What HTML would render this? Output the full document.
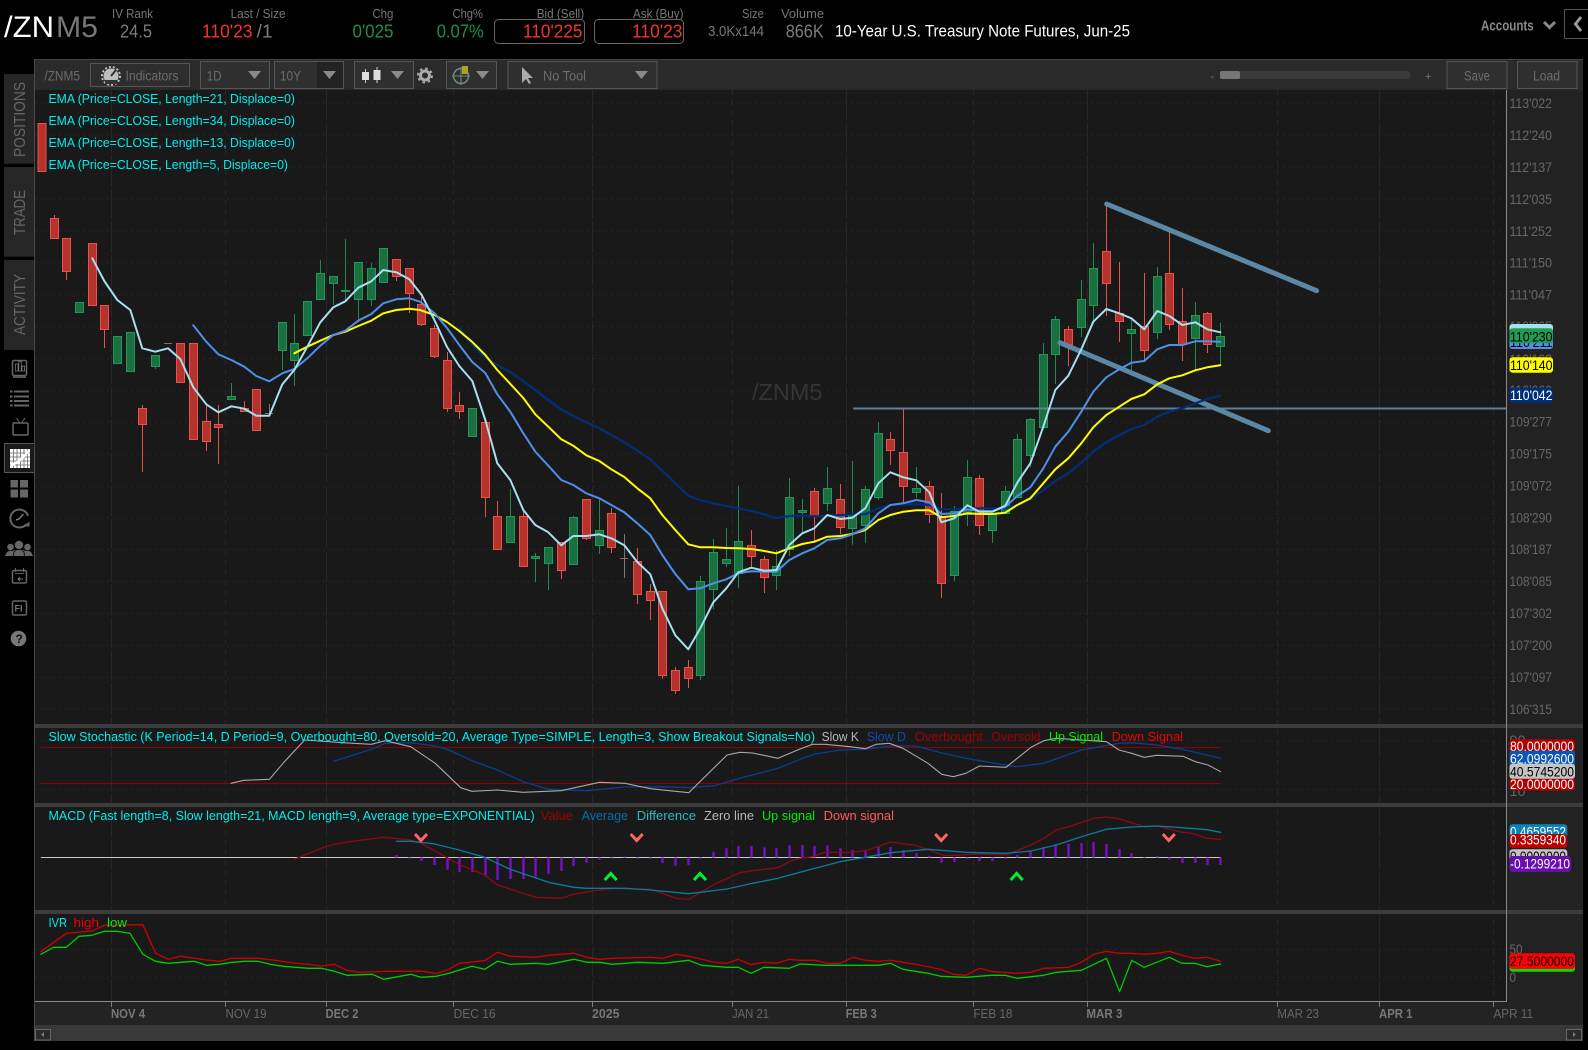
<!DOCTYPE html>
<html><head><meta charset="utf-8"><title>/ZNM5</title>
<style>
html,body{margin:0;padding:0;background:#000;width:1588px;height:1050px;overflow:hidden}
svg{display:block;font-family:"Liberation Sans",sans-serif}
.lb{font-size:13px;fill:#777}
.v{font-size:18px}
.r{fill:#f5342c}.g{fill:#1c8f4c}.gy{fill:#7c7c7c}
.tb{font-size:13.5px;fill:#6c6c6c}
.c{font-size:13.2px;fill:#00eded}
.s{font-size:13.2px}
.p{font-size:13.5px;fill:#666}
.a{font-size:13px;fill:#666}
.ab{font-size:13px;fill:#777;font-weight:bold}
.bd{font-size:14px}
.tab{font-size:16px;fill:#666}
.ln{fill:none;stroke-linejoin:round;stroke-linecap:round}
</style></head><body>
<svg width="1588" height="1050" viewBox="0 0 1588 1050" xmlns="http://www.w3.org/2000/svg">
<rect width="1588" height="1050" fill="#000"/>

<!-- HEADER -->
<text x="4" y="37" font-size="30" fill="#fff" textLength="50" lengthAdjust="spacingAndGlyphs">/ZN</text>
<text x="56" y="37" font-size="30" fill="#777" textLength="42" lengthAdjust="spacingAndGlyphs">M5</text>
<text class="lb" x="112" y="18" textLength="41" lengthAdjust="spacingAndGlyphs">IV Rank</text>
<text class="v gy" x="120" y="37.500" textLength="32" lengthAdjust="spacingAndGlyphs">24.5</text>
<text class="lb" x="230.6" y="18" textLength="55" lengthAdjust="spacingAndGlyphs">Last / Size</text>
<text class="v r" x="202" y="37.500" textLength="50.5" lengthAdjust="spacingAndGlyphs">110'23</text>
<text class="v gy" x="256.6" y="37.500" textLength="16" lengthAdjust="spacingAndGlyphs">/1</text>
<text class="lb" x="372.4" y="18" textLength="21" lengthAdjust="spacingAndGlyphs">Chg</text>
<text class="v g" x="352.5" y="37.500" textLength="41" lengthAdjust="spacingAndGlyphs">0'025</text>
<text class="lb" x="452.5" y="18" textLength="30.5" lengthAdjust="spacingAndGlyphs">Chg%</text>
<text class="v g" x="436.7" y="37.500" textLength="47" lengthAdjust="spacingAndGlyphs">0.07%</text>
<text class="lb" x="536.7" y="18" textLength="47.5" lengthAdjust="spacingAndGlyphs">Bid (Sell)</text>
<rect x="494.5" y="19.5" width="90" height="24" rx="4" fill="#000" stroke="#666"/>
<text class="v r" x="523" y="37.500" textLength="59.5" lengthAdjust="spacingAndGlyphs">110'225</text>
<text class="lb" x="633" y="18" textLength="50.5" lengthAdjust="spacingAndGlyphs">Ask (Buy)</text>
<rect x="594.5" y="19.5" width="89" height="24" rx="4" fill="#000" stroke="#666"/>
<text class="v r" x="632" y="37.500" textLength="50.5" lengthAdjust="spacingAndGlyphs">110'23</text>
<text class="lb" x="742" y="18" textLength="21.8" lengthAdjust="spacingAndGlyphs">Size</text>
<text x="708" y="36" font-size="15" fill="#777" textLength="56" lengthAdjust="spacingAndGlyphs">3.0Kx144</text>
<text class="lb" x="781" y="18" textLength="43" lengthAdjust="spacingAndGlyphs">Volume</text>
<text class="v gy" x="785.7" y="37.500" textLength="38" lengthAdjust="spacingAndGlyphs">866K</text>
<text x="835" y="36.500" font-size="17" fill="#fff" textLength="295" lengthAdjust="spacingAndGlyphs">10-Year U.S. Treasury Note Futures, Jun-25</text>
<text x="1481" y="30.500" font-size="15" font-weight="bold" fill="#888" textLength="52.7" lengthAdjust="spacingAndGlyphs">Accounts</text>
<path d="M1544 22l5.5 5.5 5.5-5.5" fill="none" stroke="#888" stroke-width="3"/>
<path d="M1564.5 38.5V9.5H1588M1564.5 38.5H1588" fill="none" stroke="#555"/>
<path d="M1581 17l-5.5 7 5.5 7" fill="none" stroke="#999" stroke-width="3"/>

<!-- SIDE TABS -->
<path d="M4 74h30v89.7H4zM4 167h30v89.7H4zM4 260h30v90H4z" fill="#262626"/>
<text class="tab" transform="translate(25 157) rotate(-90)" textLength="75" lengthAdjust="spacingAndGlyphs">POSITIONS</text>
<text class="tab" transform="translate(25 235) rotate(-90)" textLength="45" lengthAdjust="spacingAndGlyphs">TRADE</text>
<text class="tab" transform="translate(25 335) rotate(-90)" textLength="61" lengthAdjust="spacingAndGlyphs">ACTIVITY</text>

<!-- PANEL -->
<rect x="34" y="59" width="1549" height="982" fill="#191919"/>
<rect x="34" y="59" width="1549" height="31" fill="#2a2a2a"/>
<path d="M34 59.5H1583" stroke="#444"/>
<path d="M34.5 59V1041" stroke="#4a4a4a"/>
<rect x="1507" y="90" width="76" height="911" fill="#222"/>

<!-- Toolbar -->
<text class="tb" x="44.4" y="80.500" textLength="35.6" lengthAdjust="spacingAndGlyphs">/ZNM5</text>
<rect x="90.5" y="63.5" width="99" height="23" fill="#2d2d2d" stroke="#555"/>
<circle cx="111" cy="76" r="7.5" fill="#bdbdbd"/><circle cx="111" cy="76" r="9" fill="none" stroke="#bdbdbd" stroke-width="2" stroke-dasharray="2 2"/>
<path d="M106 81h10v2h-10zM111 76l5-6" stroke="#333" stroke-width="2" fill="none"/>
<text class="tb" x="125.5" y="80.500" textLength="53" lengthAdjust="spacingAndGlyphs">Indicators</text>
<rect x="200.5" y="61.5" width="69" height="27" fill="#2f2f2f" stroke="#555"/>
<text class="tb" x="206.6" y="80.500" textLength="15" lengthAdjust="spacingAndGlyphs">1D</text>
<path d="M248 71h13l-6.500 8z" fill="#8a8a8a"/>
<rect x="274.500" y="61.500" width="69" height="27" fill="#2f2f2f" stroke="#555"/>
<rect x="317" y="62" width="26" height="26" fill="#232323"/>
<text class="tb" x="280" y="80.500" textLength="21" lengthAdjust="spacingAndGlyphs">10Y</text>
<path d="M323 71h13l-6.500 8z" fill="#8a8a8a"/>
<rect x="354.500" y="61.500" width="59" height="27" fill="#2f2f2f" stroke="#555"/>
<path d="M365.500 69v14M377 67v16" stroke="#ccc"/><path d="M362 72h7v8h-7zM373.500 70h7v10h-7z" fill="#ddd"/>
<path d="M391 71h13l-6.500 8z" fill="#8a8a8a"/>
<circle cx="425" cy="75.500" r="4.500" fill="none" stroke="#aaa" stroke-width="3"/><circle cx="425" cy="75.500" r="7" fill="none" stroke="#aaa" stroke-width="2" stroke-dasharray="2.500 3"/>
<rect x="446.500" y="61.500" width="50" height="27" fill="#2f2f2f" stroke="#555"/>
<circle cx="461" cy="76" r="7.500" fill="none" stroke="#6f8a80" stroke-width="1.500"/><path d="M452 76h18M461 67v18" stroke="#6f8a80"/>
<rect x="462" y="66" width="6" height="8" fill="#a9a51f"/>
<path d="M476 71h13l-6.500 8z" fill="#8a8a8a"/>
<rect x="508" y="61.500" width="149" height="27" fill="#2f2f2f" stroke="#555"/>
<path d="M522 67v16l4-4 3 5 2-1-3-5h5z" fill="#aaa"/>
<text class="tb" x="543" y="80.500" textLength="43" lengthAdjust="spacingAndGlyphs">No Tool</text>
<path d="M635 71h13l-6.500 8z" fill="#8a8a8a"/>
<text x="1210.500" y="80" font-size="11" fill="#777">-</text>
<rect x="1220" y="71" width="190.500" height="8" rx="3" fill="#3a3a3a"/>
<rect x="1220" y="71" width="20" height="8" rx="2" fill="#777"/>
<text x="1425" y="80" font-size="11" fill="#777">+</text>
<rect x="1447" y="61.500" width="60" height="27" fill="#2f2f2f" stroke="#555"/>
<text class="tb" x="1464" y="80.500" textLength="26" lengthAdjust="spacingAndGlyphs">Save</text>
<rect x="1517.500" y="61.500" width="59.500" height="27" fill="#2f2f2f" stroke="#555"/>
<text class="tb" x="1533" y="80.500" textLength="27" lengthAdjust="spacingAndGlyphs">Load</text>

<!-- GRID -->
<g fill="none" stroke="#272727">
<path stroke-dasharray="2 4" d="M35 103H1506M35 135H1506M35 167H1506M35 199H1506M35 231H1506M35 262.500H1506M35 294.500H1506M35 326.500H1506M35 358.500H1506M35 390H1506M35 422H1506M35 454H1506M35 486H1506M35 518H1506M35 549.500H1506M35 581.500H1506M35 613.500H1506M35 645.500H1506M35 677.500H1506M35 709H1506"/>
<path stroke-dasharray="30 3" d="M111.500 90V724M326.500 90V724M592.500 90V724M846.500 90V724M1087.500 90V724M1379.500 90V724M111.500 728V803M326.500 728V803M592.500 728V803M846.500 728V803M1087.500 728V803M1379.500 728V803M111.500 807V910M326.500 807V910M592.500 807V910M846.500 807V910M1087.500 807V910M1379.500 807V910M111.500 914V1001M326.500 914V1001M592.500 914V1001M846.500 914V1001M1087.500 914V1001M1379.500 914V1001"/>
<path stroke-dasharray="5 5" d="M225.500 90V1001M453.500 90V1001M732.500 90V1001M973.500 90V1001M1277.500 90V1001M1493.500 90V1001"/>
<path stroke-dasharray="2 4" d="M35 741H1506M35 789.500H1506M35 949.500H1506M35 977.500H1506"/>
</g>

<!-- Hidden candle left -->
<rect x="38" y="123.500" width="8" height="48" fill="#b5332c" stroke="#e5534b"/>

<!-- CANDLE WICKS -->
<path fill="none" stroke="#e5534b" d="M54.500 215V239M66.500 271V280M104.500 330V348M142.500 405V472M206.500 405V451M218.500 405V464M244.500 401V412M396.500 259V281M409.500 268V313M421.500 297V326M434.500 325V358M447.500 352V412M459.500 392V419M485.500 422V517M497.500 501V550M523.500 511V567M561.500 542V579M586.500 499V540M611.500 508V553M637.500 548V604M650.500 584V620M662.500 591V679M675.500 667V694M688.500 660V688M751.500 530V567M764.500 556V593M814.500 488V543M840.500 484V534M890.500 432V465M903.500 409V503M929.500 481V523M941.500 493V598M979.500 475V535M1068.500 326V366M1106.500 206V316M1119.500 262V342M1144.500 273V361M1169.500 230V330M1182.500 288V361M1207.500 312V353"/>
<path fill="none" stroke="#22884e" d="M155.500 355V369M231.500 383V400M282.500 322V370M294.500 314V386M320.500 260V300M333.500 276V305M345.500 239V300M358.500 262V322M371.500 263V306M510.500 489V543M535.500 553V582M548.500 547V590M573.500 516V565M599.500 499V554M700.500 576V680M713.500 539V609M726.500 528V567M738.500 486V588M776.500 550V590M789.500 478V556M802.500 499V532M827.500 467V511M852.500 461V545M865.500 486V543M878.500 422V500M916.500 467V498M954.500 506V581M967.500 460V526M992.500 514V543M1005.500 486V514M1017.500 434V498M1030.500 418V467M1043.500 343V428M1055.500 316V384M1081.500 280V337M1093.500 243V323M1131.500 320V370M1157.500 267V339M1195.500 302V370M1220.500 323V365"/>
<path fill="none" stroke="#777" d="M164 343.500h8M269.500 404V414M265 413.500h8M624.500 534V578M620 558.500h8"/>

<!-- RED BODIES -->
<path fill="#b5332c" stroke="#e5534b" d="M50.500 218.500h8v20h-8zM62.500 238.500h8v33h-8zM88.500 243.500h8v62h-8zM100.500 305.500h8v24h-8zM138.500 408.500h8v16h-8zM176.500 343.500h8v39h-8zM189.500 343.500h8v96h-8zM202.500 421.500h8v20h-8zM214.500 424.500h8v3h-8zM240.500 408.500h8v3h-8zM252.500 389.500h8v41h-8zM392.500 259.500h8v17h-8zM405.500 268.500h8v25h-8zM417.500 304.500h8v20h-8zM430.500 328.500h8v28h-8zM443.500 360.500h8v48h-8zM455.500 405.500h8v6h-8zM481.500 422.500h8v75h-8zM493.500 516.500h8v33h-8zM519.500 516.500h8v50h-8zM557.500 542.500h8v28h-8zM582.500 499.500h8v39h-8zM607.500 513.500h8v34h-8zM633.500 561.500h8v33h-8zM646.500 591.500h8v9h-8zM658.500 591.500h8v84h-8zM671.500 670.500h8v20h-8zM684.500 667.500h8v11h-8zM747.500 545.500h8v11h-8zM760.500 559.500h8v18h-8zM810.500 491.500h8v25h-8zM836.500 499.500h8v28h-8zM886.500 439.500h8v11h-8zM899.500 452.500h8v34h-8zM925.500 486.500h8v28h-8zM937.500 516.500h8v67h-8zM975.500 478.500h8v47h-8zM1064.500 329.500h8v15h-8zM1102.500 251.500h8v32h-8zM1115.500 313.500h8v8h-8zM1140.500 326.500h8v24h-8zM1165.500 273.500h8v51h-8zM1178.500 321.500h8v23h-8zM1203.500 313.500h8v31h-8z"/>
<!-- GREEN BODIES -->
<path fill="#1a7040" stroke="#25965a" d="M75.500 302.500h8v10h-8zM113.500 336.500h8v27h-8zM126.500 332.500h8v39h-8zM151.500 355.500h8v11h-8zM227.500 396.500h8v3h-8zM278.500 322.500h8v28h-8zM290.500 343.500h8v17h-8zM303.500 301.500h8v34h-8zM316.500 273.500h8v26h-8zM329.500 276.500h8v7h-8zM341.500 290.500h8v1h-8zM354.500 262.500h8v37h-8zM367.500 268.500h8v31h-8zM379.500 248.500h8v34h-8zM468.500 408.500h8v28h-8zM506.500 516.500h8v26h-8zM531.500 556.500h8v2h-8zM544.500 547.500h8v16h-8zM569.500 517.500h8v47h-8zM595.500 530.500h8v15h-8zM696.500 581.500h8v94h-8zM709.500 552.500h8v37h-8zM722.500 559.500h8v4h-8zM734.500 541.500h8v32h-8zM772.500 566.500h8v9h-8zM785.500 497.500h8v52h-8zM798.500 510.500h8v2h-8zM823.500 488.500h8v15h-8zM848.500 514.500h8v14h-8zM861.500 489.500h8v36h-8zM874.500 433.500h8v64h-8zM912.500 488.500h8v4h-8zM950.500 511.500h8v64h-8zM963.500 477.500h8v37h-8zM988.500 514.500h8v16h-8zM1001.500 491.500h8v22h-8zM1013.500 439.500h8v58h-8zM1026.500 419.500h8v36h-8zM1039.500 354.500h8v73h-8zM1051.500 319.500h8v35h-8zM1077.500 299.500h8v28h-8zM1089.500 268.500h8v37h-8zM1127.500 329.500h8v4h-8zM1153.500 276.500h8v56h-8zM1191.500 315.500h8v23h-8zM1216.500 336.500h8v10h-8z"/>

<!-- TREND LINES -->
<path class="ln" d="M854 408.500H1506" stroke="#5f8096" stroke-width="2"/>
<path class="ln" d="M1106.700 204L1316.600 290.700M1060 342.700L1268.300 430.700" stroke="#5c88a7" stroke-width="5"/>

<!-- EMA LINES -->
<path class="ln" stroke="#012e78" stroke-width="2.200" d="M459.300 328L472.300 345L485.300 358L497.300 365L510.300 372L521.700 380L535.300 390L548.300 400L561.300 409.300L573.300 416L586.300 422.300L599.300 428.300L611.300 435L624.300 442.300L637.300 450.700L650.300 459.300L662.300 470.700L675.300 483.300L688.300 495.700L700.300 500.300L713.300 503.300L726.300 506L738.300 508.300L751.300 511L764.300 514.300L776.300 518L789.300 516L802.300 515.700L814.300 516.300L827.300 516L840.300 515L852.300 514.300L865.300 514.300L878.300 508.300L890.300 505L903.300 504.300L916.300 504L929.300 505L941.300 509.300L954.300 509.300L967.300 508.300L979.300 508.300L992.300 508.300L1005.300 508.300L1017.300 505L1030.300 499.300L1043.300 490L1055.300 481L1068.300 473.300L1081.300 462.700L1093.300 451.700L1106.300 442.300L1119.300 435L1131.300 429L1144.300 425L1157.300 416.700L1169.300 411.700L1182.300 408.300L1195.300 403.300L1207.300 399L1220.300 395.700"/>
<path class="ln" stroke="#ffff00" stroke-width="2" d="M294.300 353.300L307.300 346.700L320.300 340.700L333.300 335L345.300 331.700L358.300 326L371.300 320.700L383.300 313.300L396.300 310L409.300 308.700L420 310L434.400 315L447 322L459.300 331L472.300 342L485.300 355L497.300 370L506.700 380L523.300 398L535.300 414.300L548.300 426.700L561.300 439.300L573.300 445.700L586.300 455.300L599.300 461L611.300 469.300L624.300 477L637.300 488.300L650.300 498.300L662.300 515L675.300 530L688.300 544.300L700.300 547.300L713.300 547.300L726.300 548L738.300 548.300L751.300 549L764.300 551L776.300 553.300L789.300 548.300L802.300 544L814.300 541.700L827.300 536.700L840.300 536L852.300 534L865.300 530L878.300 520L890.300 515L903.300 511.700L916.300 510.300L929.300 510.300L941.300 517.300L954.300 516L967.300 513.300L979.300 514L992.300 514L1005.300 512.700L1017.300 505L1030.300 498.300L1043.300 483.300L1055.300 469.300L1068.300 458.300L1081.300 443.300L1093.300 427.300L1106.300 415L1119.300 406.700L1131.300 399L1144.300 394.300L1157.300 384.300L1169.300 378.300L1182.300 375.300L1195.300 370.300L1207.300 367.300L1220.300 365.300"/>
<path class="ln" stroke="#4f8fe8" stroke-width="2" d="M193.300 325.300L206.300 341.700L218.300 354.300L231.300 360L244.300 366.700L256.300 376L269.300 381.300L282.300 373.300L294.300 369L307.300 358.300L320.300 345.700L333.300 335L345.300 330.700L358.300 320.700L371.300 314L383.300 303.300L396.300 299.300L409.300 298.300L420 301.700L434.400 313L447 328L459.300 345L472.300 362L485.300 373L497.300 394.300L510.300 411.700L523.300 433.300L535.300 451.700L548.300 465.700L561.300 480L573.300 485L586.300 493.300L599.300 498.300L611.300 505L624.300 512.300L637.300 523.300L650.300 535L662.300 555L675.300 574L688.300 589.300L700.300 588.300L713.300 583.300L726.300 579.300L738.300 573.300L751.300 571.300L764.300 571.700L776.300 571.700L789.300 560L802.300 553.300L814.300 548.300L827.300 540L840.300 538.300L852.300 534.300L865.300 528.300L878.300 513.300L890.300 505L903.300 503.300L916.300 500L929.300 502.300L941.300 514L954.300 513.300L967.300 509.300L979.300 511L992.300 511.300L1005.300 506.700L1017.300 496L1030.300 487.300L1043.300 468.300L1055.300 446.700L1068.300 431.700L1081.300 411.700L1093.300 391.700L1106.300 377.300L1119.300 369.300L1131.300 362.700L1144.300 361L1157.300 349.300L1169.300 345L1182.300 345L1195.300 341.300L1207.300 341.300L1220.300 341.700"/>
<path class="ln" stroke="#a8dff0" stroke-width="2" d="M92.300 258.300L104.300 281L117.300 300L130.300 310L142.300 348.300L155.300 351.700L168 348.300L180.300 359L193.300 387.300L206.300 404.300L218.300 412.300L231.300 406.300L244.300 408.700L256.300 415.700L269.300 415.700L282.300 384.300L294.300 370L307.300 346.700L320.300 322.300L333.300 307.300L345.300 301.300L358.300 287.700L371.300 281.300L383.300 270L396.300 272.300L409.300 279.300L421.700 295L434.400 320L447 347L459.300 366L472.300 381L485.300 420L497.300 463.300L510.300 480L523.300 510L535.300 525L548.300 532.300L561.300 545.300L573.300 536L586.300 536L599.300 534.300L611.300 538.300L624.300 545.300L637.300 562L650.300 574.300L662.300 608.300L675.300 635.300L688.300 649.300L700.300 628.300L713.300 602.300L726.300 588.300L738.300 572.300L751.300 567.700L764.300 570.700L776.300 570L789.300 545L802.300 533.300L814.300 528.300L827.300 515L840.300 519L852.300 517.700L865.300 508.300L878.300 483.300L890.300 472.300L903.300 477.300L916.300 480.300L929.300 492.300L941.300 522.300L954.300 518.300L967.300 505.300L979.300 511.700L992.300 511.700L1005.300 505.700L1017.300 482.700L1030.300 463.300L1043.300 426.700L1055.300 390L1068.300 375.700L1081.300 349.300L1093.300 321.700L1106.300 309L1119.300 313.300L1131.300 318.300L1144.300 329.300L1157.300 311L1169.300 316L1182.300 325L1195.300 322.300L1207.300 329.300L1220.300 332.300"/>

<!-- Watermark -->
<text x="752" y="400" font-size="23.500" fill="#343434">/ZNM5</text>

<!-- Legend EMA -->
<text class="c" x="48.500" y="103" textLength="246.500" lengthAdjust="spacingAndGlyphs">EMA (Price=CLOSE, Length=21, Displace=0)</text>
<text class="c" x="48.500" y="125" textLength="246.500" lengthAdjust="spacingAndGlyphs">EMA (Price=CLOSE, Length=34, Displace=0)</text>
<text class="c" x="48.500" y="147" textLength="246.500" lengthAdjust="spacingAndGlyphs">EMA (Price=CLOSE, Length=13, Displace=0)</text>
<text class="c" x="48.500" y="169" textLength="239.500" lengthAdjust="spacingAndGlyphs">EMA (Price=CLOSE, Length=5, Displace=0)</text>

<!-- Price axis -->
<path d="M1506.500 90V1001" stroke="#8a8a8a"/>
<g class="p">
<text class="p" x="1509.500" y="108" textLength="42.500" lengthAdjust="spacingAndGlyphs">113'022</text>
<text class="p" x="1509.500" y="140" textLength="42.500" lengthAdjust="spacingAndGlyphs">112'240</text>
<text class="p" x="1509.500" y="172" textLength="42.500" lengthAdjust="spacingAndGlyphs">112'137</text>
<text class="p" x="1509.500" y="204" textLength="42.500" lengthAdjust="spacingAndGlyphs">112'035</text>
<text class="p" x="1509.500" y="236" textLength="42.500" lengthAdjust="spacingAndGlyphs">111'252</text>
<text class="p" x="1509.500" y="267.500" textLength="42.500" lengthAdjust="spacingAndGlyphs">111'150</text>
<text class="p" x="1509.500" y="299.500" textLength="42.500" lengthAdjust="spacingAndGlyphs">111'047</text>
<text class="p" x="1509.500" y="331" textLength="42.500" lengthAdjust="spacingAndGlyphs">110'265</text>
<text class="p" x="1509.500" y="364" textLength="42.500" lengthAdjust="spacingAndGlyphs">110'162</text>
<text class="p" x="1509.500" y="395" textLength="42.500" lengthAdjust="spacingAndGlyphs">110'060</text>
<text class="p" x="1509.500" y="426.500" textLength="42.500" lengthAdjust="spacingAndGlyphs">109'277</text>
<text class="p" x="1509.500" y="458.500" textLength="42.500" lengthAdjust="spacingAndGlyphs">109'175</text>
<text class="p" x="1509.500" y="490.500" textLength="42.500" lengthAdjust="spacingAndGlyphs">109'072</text>
<text class="p" x="1509.500" y="522.500" textLength="42.500" lengthAdjust="spacingAndGlyphs">108'290</text>
<text class="p" x="1509.500" y="554" textLength="42.500" lengthAdjust="spacingAndGlyphs">108'187</text>
<text class="p" x="1509.500" y="586" textLength="42.500" lengthAdjust="spacingAndGlyphs">108'085</text>
<text class="p" x="1509.500" y="618" textLength="42.500" lengthAdjust="spacingAndGlyphs">107'302</text>
<text class="p" x="1509.500" y="650" textLength="42.500" lengthAdjust="spacingAndGlyphs">107'200</text>
<text class="p" x="1509.500" y="682" textLength="42.500" lengthAdjust="spacingAndGlyphs">107'097</text>
<text class="p" x="1509.500" y="714" textLength="42.500" lengthAdjust="spacingAndGlyphs">106'315</text>
</g>
<!-- Badges -->
<rect x="1509.500" y="324" width="43.500" height="16" rx="3" fill="#a8dff0"/>
<rect x="1509.500" y="333" width="43.500" height="16" rx="3" fill="#4f8fe8"/>
<text class="bd" x="1510" y="347" fill="#000" textLength="42.500" lengthAdjust="spacingAndGlyphs">110'211</text>
<rect x="1509.500" y="328.300" width="43.500" height="15" rx="3" fill="#1f9d55"/>
<text class="bd" x="1510" y="341.500" fill="#000" textLength="42.500" lengthAdjust="spacingAndGlyphs">110'230</text>
<rect x="1509.500" y="357.300" width="43.500" height="15.400" rx="3" fill="#ffff00"/>
<text class="bd" x="1510" y="370" fill="#000" textLength="42.500" lengthAdjust="spacingAndGlyphs">110'140</text>
<rect x="1509.500" y="387.700" width="43.500" height="15" rx="3" fill="#012e78"/>
<text class="bd" x="1510" y="400" fill="#fff" textLength="42.500" lengthAdjust="spacingAndGlyphs">110'042</text>

<!-- Separators -->
<path d="M35 724h1548v4H35zM35 803h1548v4H35zM35 910h1548v4H35z" fill="#3c3c3c"/>
<path d="M1506.500 724V1001" stroke="#8a8a8a"/>

<!-- STOCHASTIC -->
<path d="M40.800 747.500H1220.600M40.800 783.500H1220.600" stroke="#8f0000" fill="none"/>
<path class="ln" stroke="#0a3d91" stroke-width="1.300" d="M333.700 761.300L371.400 749.300L385.200 743.300L410.700 742.700L435.200 746L449 750L472 760.700L497.400 770L523 781.700L548.500 789.300L586.700 790.700L625 787L663 786.700L688.800 787.700L714.300 785.700L739.800 778.300L778 768.300L800 759.300L815 754L840 750L865.300 749.300L890.500 746L915.600 746L940.700 752.700L965.800 758.300L991 762.700L1016 766.700L1043.700 763.300L1081.400 750L1119 743.300L1131.700 742.700L1156.800 745L1182 749.300L1220.600 758.300"/>
<path class="ln" stroke="#a8a8a8" stroke-width="1.100" d="M231 783.300L243.900 780.300L269.400 779.300L283 763.300L304.600 740L342.900 742.700L371.400 744.300L385.200 740.700L410.700 746.700L435.200 763.300L460.700 787.700L471.900 791.300L497.400 790L523 792.300L561.200 790.700L599.500 782.300L625 783.300L650.500 788.700L688.800 792.700L727 755L739.800 752.300L752.600 753L778 758.300L800 749L812.600 744.300L825 744.300L850 746.700L865.300 748.700L876.400 744.300L889.400 743.300L903 748.300L928 763.300L941.700 774.300L953.300 776.700L965.800 773.300L979.400 766L1006 767.300L1031 747.300L1043.700 740.700L1056.300 738.300L1106.500 741.700L1119 750L1131.700 753.300L1144.200 757.300L1156.800 755.300L1183 756.300L1195.500 761.700L1208 765L1220.600 771.700"/>
<text class="s" x="48.500" y="741" fill="#00eded" textLength="766.500" lengthAdjust="spacingAndGlyphs">Slow Stochastic (K Period=14, D Period=9, Overbought=80, Oversold=20, Average Type=SIMPLE, Length=3, Show Breakout Signals=No)</text>
<text class="s" x="821.600" y="741" fill="#b5b5b5" textLength="37.200" lengthAdjust="spacingAndGlyphs">Slow K</text>
<text class="s" x="866.800" y="741" fill="#0a4bb0" textLength="39.200" lengthAdjust="spacingAndGlyphs">Slow D</text>
<text class="s" x="914.600" y="741" fill="#a00000" textLength="68.400" lengthAdjust="spacingAndGlyphs">Overbought</text>
<text class="s" x="991.500" y="741" fill="#a00000" textLength="49" lengthAdjust="spacingAndGlyphs">Oversold</text>
<text class="s" x="1049" y="741" fill="#00ee00" textLength="54" lengthAdjust="spacingAndGlyphs">Up Signal</text>
<text class="s" x="1111.600" y="741" fill="#ee0000" textLength="71.400" lengthAdjust="spacingAndGlyphs">Down Signal</text>
<text class="p" x="1509.500" y="745" textLength="16" lengthAdjust="spacingAndGlyphs">90</text>
<text class="p" x="1509.500" y="796" textLength="16" lengthAdjust="spacingAndGlyphs">10</text>
<rect x="1509.500" y="739.300" width="65.500" height="15" rx="3" fill="#b50000"/>
<text class="bd" x="1510" y="751" fill="#fff" textLength="64" lengthAdjust="spacingAndGlyphs">80.0000000</text>
<rect x="1509.500" y="750.700" width="65.500" height="16" rx="3" fill="#0a56b8"/>
<text class="bd" x="1510" y="763.500" fill="#fff" textLength="64" lengthAdjust="spacingAndGlyphs">62.0992600</text>
<rect x="1509.500" y="777" width="65.500" height="13.500" rx="3" fill="#b50000"/>
<text class="bd" x="1510" y="789" fill="#fff" textLength="64" lengthAdjust="spacingAndGlyphs">20.0000000</text>
<rect x="1509.500" y="763.700" width="65.500" height="15" rx="3" fill="#c4c4c4"/>
<text class="bd" x="1510" y="776.500" fill="#000" textLength="64" lengthAdjust="spacingAndGlyphs">40.5745200</text>

<!-- MACD -->
<path d="M40.800 857.500H1220.600" stroke="#c8c8c8"/>
<path fill="none" stroke="#7410bd" stroke-width="2.500" d="M396.500 857.500V855M409.500 857.500V858.500M421.500 857.500V861M434.500 857.500V865M447.500 857.500V869.700M459.500 857.500V872M472.500 857.500V872M485.500 857.500V876M497.500 857.500V880M510.500 857.500V879M523.500 857.500V879M535.500 857.500V877.300M548.500 857.500V874M561.500 857.500V871M573.500 857.500V866M586.500 857.500V862.700M599.500 857.500V859.700M611.500 857.500V858.500M624.500 857.500V856.500M637.500 857.500V858.700M650.500 857.500V858.700M662.500 857.500V863M675.500 857.500V865.700M688.500 857.500V865M700.500 857.500V858.700M713.500 857.500V851.700M726.500 857.500V848.300M738.500 857.500V846M751.500 857.500V846M764.500 857.500V847.300M776.500 857.500V848.300M789.500 857.500V845.300M802.500 857.500V845M814.500 857.500V846M827.500 857.500V845.300M840.500 857.500V848.300M852.500 857.500V850M865.500 857.500V850M878.500 857.500V847M890.500 857.500V847M903.500 857.500V850M916.500 857.500V853M929.500 857.500V855.700M941.500 857.500V862.700M954.500 857.500V862M967.500 857.500V859M979.500 857.500V861M992.500 857.500V861M1005.500 857.500V858.700M1017.500 857.500V855M1030.500 857.500V851.300M1043.500 857.500V847M1055.500 857.500V844.300M1068.500 857.500V843.700M1081.500 857.500V843M1093.500 857.500V842M1106.500 857.500V844M1119.500 857.500V849M1131.500 857.500V853M1144.500 857.500V858.300M1157.500 857.500V856M1169.500 857.500V859.700M1182.500 857.500V863M1195.500 857.500V863M1207.500 857.500V865M1220.500 857.500V865"/>
<path class="ln" stroke="#8b0a14" stroke-width="1.300" d="M294.400 859.300L321.400 848.300L333.700 844.300L357 840.700L383.700 837.300L410.700 840L421 843.300L446.400 857.300L459.200 864.300L484.700 875L497.400 885L535.700 897.300L561.200 898.300L574 894L612.200 888.300L650.500 889.300L676 898.300L688.800 899.300L714.300 884.300L739.800 872.700L752.600 870.700L778 867.700L790.800 861L800 858.300L812.600 856.700L825 852.300L850 852.300L865.300 850.700L890.500 842L915.600 845.300L943.200 855.300L953.300 855.300L978.400 854L1006 855L1031 845L1043.700 838.300L1056.300 830L1068.800 826.700L1094 818.300L1106.500 817L1119 818.700L1144.200 826.700L1156.800 826L1182 832.300L1192 833.300L1207 838.300L1220.600 839.300"/>
<path class="ln" stroke="#0c7a9e" stroke-width="1.300" d="M396.400 841.300L410.700 841.300L433.700 843.700L459.200 850L484.700 857.300L510.200 869.300L548.500 882.300L574 887.300L586.700 888.300L625 888.300L650.500 890L688.800 893.700L727 889L752.600 883.300L778 878.300L800 872.300L840 861.700L865.300 857.300L890.500 852.700L928 849.300L965.800 852.300L1006 853.300L1031 851L1056.300 845L1081.400 836.700L1106.500 829.300L1131.700 827L1156.800 826L1182 827.700L1207 829.700L1220.600 832.300"/>
<path fill="none" stroke="#ff6464" stroke-width="3" d="M415 834l6 6.500 6-6.500M630.700 834l6 6.500 6-6.500M935.200 834l6 6.500 6-6.500M1162.800 834l6 6.500 6-6.500"/>
<path fill="none" stroke="#00ee33" stroke-width="3" d="M604.700 880l6-6.500 6 6.500M694 880l6-6.500 6 6.500M1010.600 880l6-6.500 6 6.500"/>
<text class="s" x="48.500" y="820" fill="#00eded" textLength="486.200" lengthAdjust="spacingAndGlyphs">MACD (Fast length=8, Slow length=21, MACD length=9, Average type=EXPONENTIAL)</text>
<text class="s" x="540.800" y="820" fill="#a00000" textLength="32.200" lengthAdjust="spacingAndGlyphs">Value</text>
<text class="s" x="581.600" y="820" fill="#0a6ea8" textLength="46.400" lengthAdjust="spacingAndGlyphs">Average</text>
<text class="s" x="636.700" y="820" fill="#2fb8bb" textLength="59.300" lengthAdjust="spacingAndGlyphs">Difference</text>
<text class="s" x="704" y="820" fill="#b5b5b5" textLength="50" lengthAdjust="spacingAndGlyphs">Zero line</text>
<text class="s" x="762" y="820" fill="#00ee00" textLength="53" lengthAdjust="spacingAndGlyphs">Up signal</text>
<text class="s" x="823.600" y="820" fill="#ff5a5a" textLength="70.400" lengthAdjust="spacingAndGlyphs">Down signal</text>
<rect x="1509.500" y="824.300" width="57.800" height="14" rx="3" fill="#0a84b8"/>
<text class="bd" x="1510" y="836.500" fill="#fff" textLength="56" lengthAdjust="spacingAndGlyphs">0.4659552</text>
<rect x="1509.500" y="834" width="57.800" height="14" rx="3" fill="#b50000"/>
<text class="bd" x="1510" y="844.500" fill="#fff" textLength="56" lengthAdjust="spacingAndGlyphs">0.3359340</text>
<rect x="1509.500" y="849.300" width="57.800" height="14" rx="3" fill="#c4c4c4"/>
<text class="bd" x="1510" y="861" fill="#000" textLength="56" lengthAdjust="spacingAndGlyphs">0.0000000</text>
<rect x="1509.500" y="856" width="61.500" height="16" rx="3" fill="#6a0dad"/>
<text class="bd" x="1510" y="868.500" fill="#fff" textLength="60" lengthAdjust="spacingAndGlyphs">-0.1299210</text>

<!-- IVR -->
<path class="ln" stroke="#00cc00" stroke-width="1.300" d="M40.800 954.300L53.600 947.300L66.300 947.300L79 936.300L91.800 935.300L104.600 931.300L117.300 931.300L130 933.300L142.900 954.300L155.600 961.300L168.400 963.300L193.900 961.300L206.600 965.300L219.400 964.300L232 962.300L244.900 961.300L257.700 961.300L270.400 964.300L283.200 966.300L308.700 968.300L321.400 968.300L334.200 971.300L347 975.300L372.400 974.300L383.700 979.300L410.700 974.300L421 977.300L436.200 976.300L449 973.300L472 966.300L484.700 969.300L497.400 961.300L510.200 964.300L535.700 963.300L548.500 964.300L574 959.300L586.700 962.300L599.500 962.300L612.200 964.300L637.700 962.300L663.300 963.300L688.800 960.300L701.500 965.300L727 967.300L738.300 967.300L751 973.300L763.800 967.300L789.300 968.300L800 964L825 965.300L878 965.300L890.500 963.300L903 969.300L928 973.300L940.700 976.300L965.800 977.300L991 975.300L1005 975.300L1017 978.300L1043.700 975.300L1056.300 972.300L1081.400 970.300L1106.500 958.300L1119.600 991.700L1131.700 960.300L1144.200 967.300L1169.300 957.300L1182 963.300L1194.500 963.300L1207 966.700L1220.600 964"/>
<path class="ln" stroke="#cc0000" stroke-width="1.300" d="M40.800 951.700L66.300 933.300L91.800 931L104.600 925.300L142.900 924.700L155.600 953.300L168.400 959.300L181 956.300L206.600 960L219.400 961.300L232 958.300L257.700 958.300L270.400 959.700L293.400 963L308.700 964.300L321.400 966L334.200 964.300L347 970.300L359.700 972.300L385.200 971.300L423.500 971.300L436.200 973.700L449 969.300L459.200 963.300L484.700 960.700L497.400 952.300L510.200 956.300L535.700 957.300L548.500 955.300L574 953.300L586.700 957.300L599.500 959.300L612.200 958.300L650.500 957.300L663.300 958.300L676 954.300L688.800 956.300L714.300 962.300L727 963.300L738.300 959.300L751 964.700L763.800 962.300L776.500 963.300L789.300 959.300L800 960.300L815 960.300L827.600 963.300L840.200 963.300L852.800 957.300L865.300 960.300L878 961.300L890.500 960.300L915.600 964.300L940.700 969.300L953.300 974.300L965.800 975.300L979.400 968.300L991 971.300L1016 973.300L1031 972.300L1043.700 968.300L1068.800 967.300L1081.400 962.300L1094 954.300L1106.500 951.300L1119 953.300L1131.700 953.300L1144.200 954.300L1156.800 953.300L1169.300 951.300L1182 955.300L1194.500 958.300L1207 957.300L1220.600 961.300"/>
<text class="s" x="48.500" y="927" fill="#00eded" textLength="18.500" lengthAdjust="spacingAndGlyphs">IVR</text>
<text class="s" x="73.500" y="927" fill="#ee0000" textLength="25.500" lengthAdjust="spacingAndGlyphs">high</text>
<text class="s" x="107" y="927" fill="#00ee00" textLength="20" lengthAdjust="spacingAndGlyphs">low</text>
<text class="p" x="1509.500" y="954" textLength="13" lengthAdjust="spacingAndGlyphs">50</text>
<text class="p" x="1509.500" y="982" textLength="6.500" lengthAdjust="spacingAndGlyphs">0</text>
<rect x="1509.500" y="956" width="65.500" height="15.700" rx="3" fill="#00e000"/>
<rect x="1509.500" y="953.300" width="65.500" height="15.700" rx="3" fill="#ff0000"/>
<text class="bd" x="1510" y="966" fill="#000" textLength="64" lengthAdjust="spacingAndGlyphs">27.5000000</text>

<!-- Time axis -->
<rect x="35" y="1001" width="1548" height="24" fill="#232323"/>
<path d="M35 1001.500H1507" stroke="#8a8a8a"/>
<path d="M111.500 1002v5M225.500 1002v5M326.500 1002v5M453.500 1002v5M592.500 1002v5M732.500 1002v5M846.500 1002v5M973.500 1002v5M1087.500 1002v5M1277.500 1002v5M1379.500 1002v5M1493.500 1002v5" stroke="#777"/>
<text class="ab" x="111" y="1018" textLength="34" lengthAdjust="spacingAndGlyphs">NOV 4</text>
<text class="a" x="225.500" y="1018" textLength="41" lengthAdjust="spacingAndGlyphs">NOV 19</text>
<text class="ab" x="325.500" y="1018" textLength="33" lengthAdjust="spacingAndGlyphs">DEC 2</text>
<text class="a" x="453.600" y="1018" textLength="42" lengthAdjust="spacingAndGlyphs">DEC 16</text>
<text class="ab" x="592" y="1018" textLength="27.500" lengthAdjust="spacingAndGlyphs">2025</text>
<text class="a" x="732" y="1018" textLength="37" lengthAdjust="spacingAndGlyphs">JAN 21</text>
<text class="ab" x="845.700" y="1018" textLength="31" lengthAdjust="spacingAndGlyphs">FEB 3</text>
<text class="a" x="973.400" y="1018" textLength="39" lengthAdjust="spacingAndGlyphs">FEB 18</text>
<text class="ab" x="1086.400" y="1018" textLength="36" lengthAdjust="spacingAndGlyphs">MAR 3</text>
<text class="a" x="1277.400" y="1018" textLength="41.500" lengthAdjust="spacingAndGlyphs">MAR 23</text>
<text class="ab" x="1379" y="1018" textLength="33.500" lengthAdjust="spacingAndGlyphs">APR 1</text>
<text class="a" x="1493.500" y="1018" textLength="39.500" lengthAdjust="spacingAndGlyphs">APR 11</text>

<!-- Scrollbar -->
<rect x="35" y="1025" width="1548" height="16" fill="#383838"/>
<rect x="35.500" y="1029.500" width="15" height="10.500" fill="#2a2a2a" stroke="#666"/>
<path d="M44 1032v5l-3-2.500z" fill="#777"/>
<rect x="1566.500" y="1029.500" width="15" height="10.500" fill="#2a2a2a" stroke="#666"/>
<path d="M1573 1032v5l3-2.500z" fill="#777"/>

<!-- SIDE ICONS -->
<rect x="12.500" y="360.500" width="14" height="15" rx="1.500" fill="none" stroke="#666" stroke-width="1.500"/>
<path d="M13 377h13" stroke="#555" stroke-width="2"/>
<path d="M15.500 364h2.500v7h-2.500zM18.800 361.500h2.500v9.500h-2.500zM22 366h2.500v5h-2.500z" fill="none" stroke="#777" stroke-width=".8"/>
<path d="M10 391.500h2.500M14 391.500h15M10 396.500h2.500M14 396.500h15M10 401h2.500M14 401h15M10 405.500h2.500M14 405.500h15" stroke="#666" stroke-width="2"/>
<rect x="13" y="423" width="15" height="12" rx="1" fill="none" stroke="#666" stroke-width="1.500"/>
<path d="M16.500 418l3 4.500M25 418l-3 4.500" stroke="#666"/>
<path d="M4 443.500H34V473H4z" fill="#191919"/>
<path d="M34 443.500H4.500V472.500H34" fill="none" stroke="#555"/>
<rect x="10" y="449" width="20" height="19" fill="#fff"/>
<path d="M13.500 449v19M17 449v19M20.500 449v19M24 449v19M27.500 449v19M10 453h20M10 457h20M10 461h20M10 465h20" stroke="#666" stroke-width=".8"/>
<path d="M11 466l8-5 5-5 5-5" stroke="#fff" stroke-width="2.500" fill="none"/>
<path d="M10.500 480h7.500v7.500h-7.500zM20 480h8v7.500h-8zM10.500 489.500h7.500v8h-7.500zM20 489.500h8v8h-8z" fill="#666"/>
<path d="M26.500 524a9 9 0 1 1 1.500-8" fill="none" stroke="#666" stroke-width="2"/>
<path d="M19 519l4.500-5M19 519l-3 1" stroke="#777" stroke-width="1.500"/>
<path d="M23 526.500h6.500v-5z" fill="#666"/>
<circle cx="19" cy="545" r="4.200" fill="#666"/><circle cx="10.500" cy="547" r="3.300" fill="#666"/><circle cx="27.500" cy="547" r="3.300" fill="#666"/>
<path d="M5 556l2-4c2-1.500 4-1.500 6-1l1-1h10l1 1c2-.5 4-.5 6 1l2 4z" fill="#666"/>
<path d="M13.500 556l.5-4 3-2.500M24.500 556l-.5-4-3-2.500" stroke="#000" stroke-width=".8" fill="none"/>
<rect x="12.500" y="570.500" width="14" height="12.500" rx="1.500" fill="none" stroke="#666" stroke-width="1.500"/>
<path d="M15.500 568v4M23.500 568v4" stroke="#666"/>
<path d="M15 573.500h9" stroke="#555"/>
<path d="M23 579h-5l2-2M18 579l2 2" fill="none" stroke="#777"/>
<rect x="12.500" y="601" width="14" height="14" rx="1.500" fill="none" stroke="#666" stroke-width="1.500"/>
<text x="14.500" y="611.500" font-size="9" font-weight="bold" fill="#777">FI</text>
<circle cx="18.500" cy="638.500" r="7.800" fill="#777"/>
<text x="15.500" y="643" font-size="12" font-weight="bold" fill="#111">?</text>
</svg>
</body></html>
